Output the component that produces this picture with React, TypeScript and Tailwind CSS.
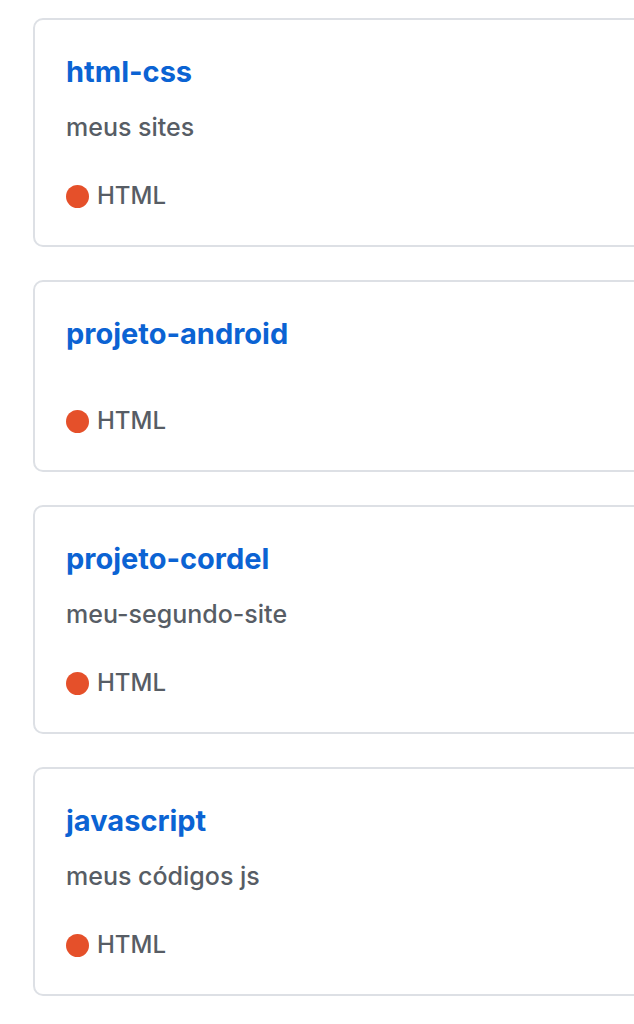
import React from 'react';

interface Repo {
  name: string;
  description?: string;
  language: string;
}

const repos: Repo[] = [
  { name: 'html-css', description: 'meus sites', language: 'HTML' },
  { name: 'projeto-android', language: 'HTML' },
  { name: 'projeto-cordel', description: 'meu-segundo-site', language: 'HTML' },
  { name: 'javascript', description: 'meus códigos js', language: 'HTML' },
];

const RepoCard: React.FC<{ repo: Repo }> = ({ repo }) => (
  <div className="w-[640px] shrink-0 rounded-[10px] border-2 border-[#dde0e5] bg-white pl-[31px] pt-[34px] pb-[37px]">
    <h3 className="text-[29px] leading-[36px] font-bold text-[#0b63d3]">{repo.name}</h3>
    {repo.description && (
      <p className="mt-[21px] text-[25px] leading-[32px] font-medium text-[#575d65]">{repo.description}</p>
    )}
    <div className={`flex items-center gap-[8px] ${repo.description ? 'mt-[41px]' : 'mt-[57px]'} h-[24px]`}>
      <span className="w-[23px] h-[23px] rounded-full bg-[#e5502a]" />
      <span className="text-[24px] leading-[24px] font-medium text-[#575d65]">{repo.language}</span>
    </div>
  </div>
);

export default function App() {
  return (
    <div
      className="w-[634px] h-[1024px] overflow-hidden bg-white pl-[33px] pt-[18px] flex flex-col gap-[33px]"
      style={{ fontFamily: 'Inter, "Noto Sans", sans-serif' }}
    >
      {repos.map((r) => (
        <RepoCard key={r.name} repo={r} />
      ))}
    </div>
  );
}
